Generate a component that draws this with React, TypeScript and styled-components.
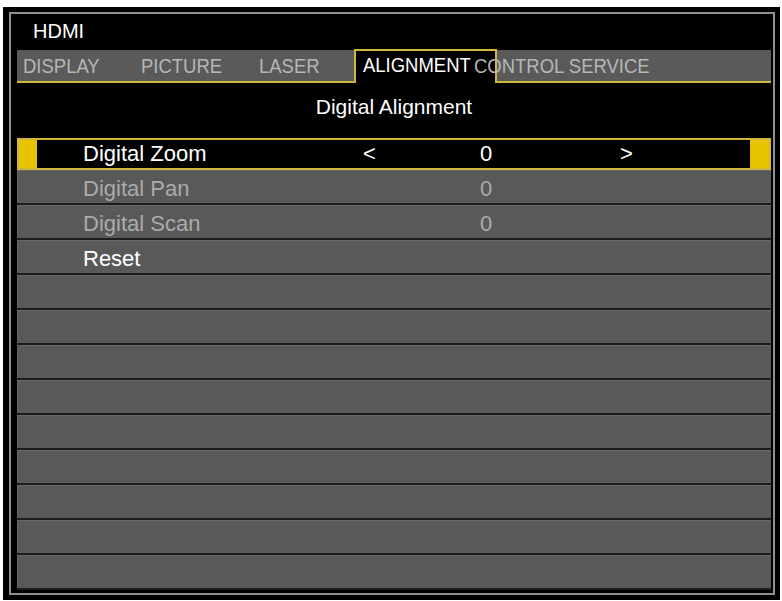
import React from "react";
import styled, { createGlobalStyle } from "styled-components";

const GlobalStyle = createGlobalStyle`
  html, body {
    margin: 0;
    padding: 0;
    background: #ffffff;
  }
  body {
    font-family: "Liberation Sans", Arial, Helvetica, sans-serif;
  }
`;

const YELLOW_LINE = "#d0b73c";
const YELLOW_BLOCK = "#e8c400";
const ROW_GRAY = "#595959";
const DIM_TEXT = "#ababab";

const Screen = styled.div`
  width: 777px;
  height: 593px;
  margin: 7px 0 0 3px;
  box-sizing: border-box;
  background: #000;
  padding: 5px 5px 5px 6px;
`;

const Bezel = styled.div`
  height: 100%;
  box-sizing: border-box;
  border: 2px solid #909090;
  padding: 0 2px 3px 6px;
  display: flex;
  flex-direction: column;
`;

const Source = styled.div`
  height: 35px;
  line-height: 35px;
  padding-left: 16px;
  font-size: 20px;
  color: #fff;
`;

const TabBar = styled.div`
  height: 34px;
  display: flex;
  align-items: flex-end;
`;

const TabStrip = styled.div<{ $width?: number }>`
  ${(p) => (p.$width ? `width: ${p.$width}px;` : "flex: 1;")}
  height: 33px;
  box-sizing: border-box;
  background: #5a5a5a;
  border-bottom: 2px solid ${YELLOW_LINE};
  padding-left: ${(p) => (p.$width ? 6 : 0)}px;
  display: flex;
  align-items: center;
  white-space: nowrap;
`;

/* tab captions on the projector OSD are drawn in a narrow face */
const Caption = styled.span<{ $bright?: boolean }>`
  display: inline-block;
  font-size: 21px;
  transform: scaleX(0.88);
  transform-origin: left center;
  color: ${(p) => (p.$bright ? "#fff" : "#b6b6b6")};
`;

const TabLabel = styled.span<{ $width?: number; $shift?: number }>`
  ${(p) => (p.$width ? `width: ${p.$width}px;` : "")}
  ${(p) => (p.$shift ? `margin-left: ${p.$shift}px;` : "")}
  flex-shrink: 0;
  display: flex;
  align-items: center;
`;

const ActiveTab = styled.div`
  width: 143px;
  height: 34px;
  box-sizing: border-box;
  border: 2px solid ${YELLOW_LINE};
  border-bottom: none;
  background: #000;
  padding: 0 0 4px 7px;
  display: flex;
  align-items: center;
  white-space: nowrap;
`;

const PageTitle = styled.div`
  height: 55px;
  line-height: 47px;
  text-align: center;
  font-size: 21px;
  color: #fff;
`;

const Menu = styled.div`
  display: flex;
  flex-direction: column;
`;

const COLUMNS = "280px 14px 218px 25px 14px 1fr";

const SelectedRow = styled.div`
  height: 32px;
  box-sizing: border-box;
  background: #000;
  border: 2px solid ${YELLOW_LINE};
  display: grid;
  grid-template-columns: 18px 46px ${COLUMNS} 19px;
  align-items: center;
  font-size: 22px;
  color: #fff;
`;

const Marker = styled.div`
  align-self: stretch;
  background: ${YELLOW_BLOCK};
`;

const Row = styled.div`
  height: 35px;
  box-sizing: border-box;
  background: ${ROW_GRAY};
  border-bottom: 2px solid #1c1c1c;
  box-shadow: inset 0 1px 0 #696969, inset 1px 0 0 #666;
  padding-top: 4px;
  display: grid;
  grid-template-columns: 66px ${COLUMNS};
  align-items: center;
  font-size: 22px;
`;

const Label = styled.span<{ $dim?: boolean }>`
  color: ${(p) => (p.$dim ? DIM_TEXT : "#fff")};
  white-space: nowrap;
`;

const Arrow = styled.span`
  color: #fff;
`;

const Value = styled.span<{ $dim?: boolean }>`
  text-align: center;
  color: ${(p) => (p.$dim ? DIM_TEXT : "#fff")};
`;

type Item = { label?: string; value?: string; dim?: boolean };

const items: Item[] = [
  { label: "Digital Pan", value: "0", dim: true },
  { label: "Digital Scan", value: "0", dim: true },
  { label: "Reset" },
  ...Array.from({ length: 9 }, () => ({})),
];

export default function App() {
  return (
    <>
      <GlobalStyle />
      <Screen>
        <Bezel>
          <Source>HDMI</Source>
          <TabBar>
            <TabStrip $width={337}>
              <TabLabel $width={118}>
                <Caption>DISPLAY</Caption>
              </TabLabel>
              <TabLabel $width={118}>
                <Caption>PICTURE</Caption>
              </TabLabel>
              <TabLabel>
                <Caption>LASER</Caption>
              </TabLabel>
            </TabStrip>
            <ActiveTab>
              <Caption $bright>ALIGNMENT</Caption>
            </ActiveTab>
            <TabStrip>
              <TabLabel $shift={-23}>
                <Caption>CONTROL SERVICE</Caption>
              </TabLabel>
            </TabStrip>
          </TabBar>
          <PageTitle>Digital Alignment</PageTitle>
          <Menu>
            <SelectedRow>
              <Marker />
              <span />
              <Label>Digital Zoom</Label>
              <Arrow>&lt;</Arrow>
              <Value>0</Value>
              <span />
              <Arrow>&gt;</Arrow>
              <span />
              <Marker />
            </SelectedRow>
            {items.map((item, i) => (
              <Row key={i}>
                <span />
                <Label $dim={item.dim}>{item.label}</Label>
                <span />
                <Value $dim={item.dim}>{item.value}</Value>
                <span />
                <span />
                <span />
              </Row>
            ))}
          </Menu>
        </Bezel>
      </Screen>
    </>
  );
}
